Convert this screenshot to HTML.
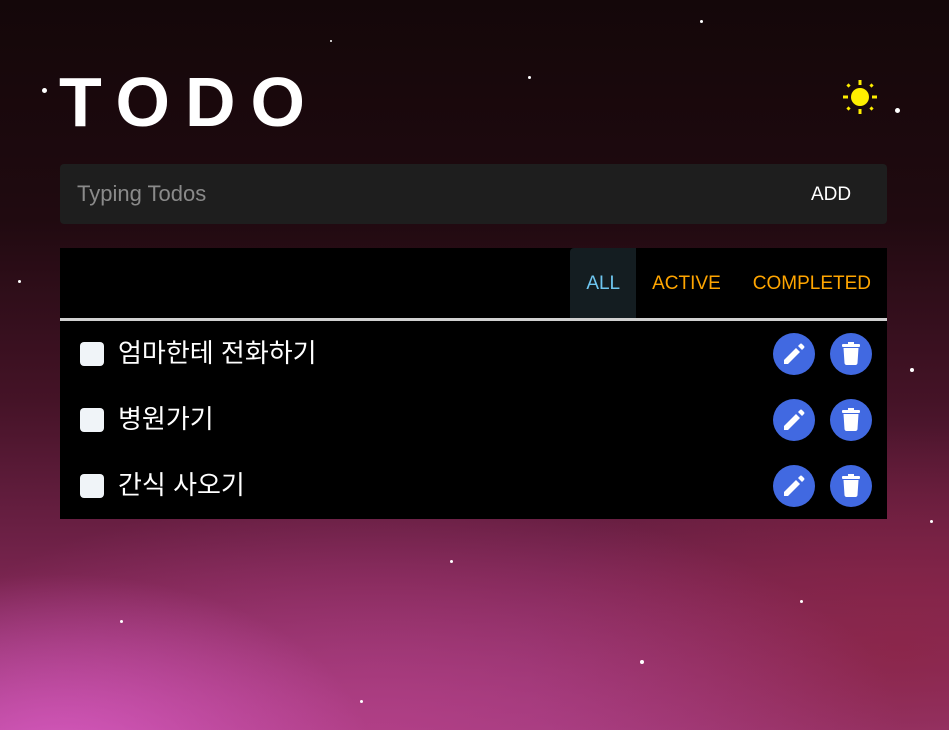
<!DOCTYPE html>
<html><head><meta charset="utf-8"><style>
*{margin:0;padding:0;box-sizing:border-box}
body{width:949px;height:730px;overflow:hidden;font-family:"Liberation Sans","Noto Sans CJK KR",sans-serif;position:relative;
background:
radial-gradient(ellipse 450px 280px at 60px 770px,rgba(225,95,205,.85),transparent 70%),
radial-gradient(ellipse 700px 330px at 380px 740px,rgba(185,65,140,.75),transparent 75%),
radial-gradient(ellipse 500px 300px at 900px 650px,rgba(140,35,65,.7),transparent 75%),
linear-gradient(180deg,#140709 0%,#200a10 30%,#451327 55%,#7a2550 80%,#9a3a78 100%);}
.star{position:absolute;background:#fff;border-radius:50%}
h1{position:absolute;left:59px;top:62px;font-size:70px;font-weight:bold;color:#fff;letter-spacing:15px;line-height:80px}
.sun{position:absolute;left:842px;top:79px}
.input{position:absolute;left:60px;top:164px;width:827px;height:60px;background:#1e1e1e;border-radius:4px}
.input span{position:absolute;left:17px;top:17px;font-size:22px;color:#8a8a8a}
.input b{position:absolute;left:751px;top:20px;font-size:19px;font-weight:normal;color:#fff}
.list{position:absolute;left:60px;top:248px;width:827px;height:271px;background:#000}
.tabs{position:absolute;right:0;top:0;height:70px;display:flex;font-size:19px}
.tab{height:70px;line-height:72px;padding:0 16px;color:#ffa500}
.tab.on{background:#141d21;color:#6ec6f0;border-radius:4px 0 0 0}
.line{position:absolute;left:0;top:70px;width:827px;height:3px;background:#d0d0d0}
.row{position:absolute;left:0;width:827px;height:42px}
.cb{position:absolute;left:20px;top:9px;width:24px;height:24px;background:#f0f4f8;border-radius:4px}
.txt{position:absolute;left:58px;top:1px;font-size:26px;line-height:38px;color:#fff}
.btn{position:absolute;top:0;width:42px;height:42px;border-radius:50%;background:#4169e1}
</style></head><body>
<div class="star" style="left:42px;top:88px;width:5px;height:5px"></div>
<div class="star" style="left:528px;top:76px;width:3px;height:3px"></div>
<div class="star" style="left:910px;top:368px;width:4px;height:4px"></div>
<div class="star" style="left:18px;top:280px;width:3px;height:3px"></div>
<div class="star" style="left:450px;top:560px;width:3px;height:3px"></div>
<div class="star" style="left:800px;top:600px;width:3px;height:3px"></div>
<div class="star" style="left:120px;top:620px;width:3px;height:3px"></div>
<div class="star" style="left:640px;top:660px;width:4px;height:4px"></div>
<div class="star" style="left:330px;top:40px;width:2px;height:2px"></div>
<div class="star" style="left:700px;top:20px;width:3px;height:3px"></div>
<div class="star" style="left:895px;top:108px;width:5px;height:5px"></div>
<div class="star" style="left:360px;top:700px;width:3px;height:3px"></div>
<div class="star" style="left:930px;top:520px;width:3px;height:3px"></div>
<h1>TODO</h1>
<svg class="sun" width="36" height="36" viewBox="0 0 36 36" fill="#ffee00"><circle cx="18" cy="18" r="9"/>
<rect x="16.5" y="1" width="3" height="5"/><rect x="16.5" y="30" width="3" height="5"/><rect x="1" y="16.5" width="5" height="3"/><rect x="30" y="16.5" width="5" height="3"/>
<rect x="5" y="5" width="3" height="3" transform="rotate(45 6.5 6.5)"/><rect x="28" y="5" width="3" height="3" transform="rotate(45 29.5 6.5)"/><rect x="5" y="28" width="3" height="3" transform="rotate(45 6.5 29.5)"/><rect x="28" y="28" width="3" height="3" transform="rotate(45 29.5 29.5)"/></svg>
<div class="input"><span>Typing Todos</span><b>ADD</b></div>
<div class="list">
<div class="tabs"><div class="tab on">ALL</div><div class="tab">ACTIVE</div><div class="tab">COMPLETED</div></div>
<div class="line"></div>
<div class="row" style="top:85px"><div class="cb"></div><div class="txt">엄마한테 전화하기</div>
<div class="btn" style="left:713px"><svg width="42" height="42" viewBox="0 0 42 42"><path d="M11 27v4h4l12-12-4-4zM25 13l4 4 2-2c.6-.6.6-1.4 0-2l-2-2c-.6-.6-1.4-.6-2 0z" fill="#fff"/></svg></div>
<div class="btn" style="left:770px"><svg width="42" height="42" viewBox="0 0 42 42" fill="#fff"><rect x="12" y="11" width="18" height="3" rx="1"/><rect x="18" y="9" width="6" height="3"/><path d="M13.5 15h15l-1 15c0 1-1 2-2 2h-9c-1 0-2-1-2-2z"/></svg></div></div>
<div class="row" style="top:151px"><div class="cb"></div><div class="txt">병원가기</div>
<div class="btn" style="left:713px"><svg width="42" height="42" viewBox="0 0 42 42"><path d="M11 27v4h4l12-12-4-4zM25 13l4 4 2-2c.6-.6.6-1.4 0-2l-2-2c-.6-.6-1.4-.6-2 0z" fill="#fff"/></svg></div>
<div class="btn" style="left:770px"><svg width="42" height="42" viewBox="0 0 42 42" fill="#fff"><rect x="12" y="11" width="18" height="3" rx="1"/><rect x="18" y="9" width="6" height="3"/><path d="M13.5 15h15l-1 15c0 1-1 2-2 2h-9c-1 0-2-1-2-2z"/></svg></div></div>
<div class="row" style="top:217px"><div class="cb"></div><div class="txt">간식 사오기</div>
<div class="btn" style="left:713px"><svg width="42" height="42" viewBox="0 0 42 42"><path d="M11 27v4h4l12-12-4-4zM25 13l4 4 2-2c.6-.6.6-1.4 0-2l-2-2c-.6-.6-1.4-.6-2 0z" fill="#fff"/></svg></div>
<div class="btn" style="left:770px"><svg width="42" height="42" viewBox="0 0 42 42" fill="#fff"><rect x="12" y="11" width="18" height="3" rx="1"/><rect x="18" y="9" width="6" height="3"/><path d="M13.5 15h15l-1 15c0 1-1 2-2 2h-9c-1 0-2-1-2-2z"/></svg></div></div>
</div>
</body></html>
